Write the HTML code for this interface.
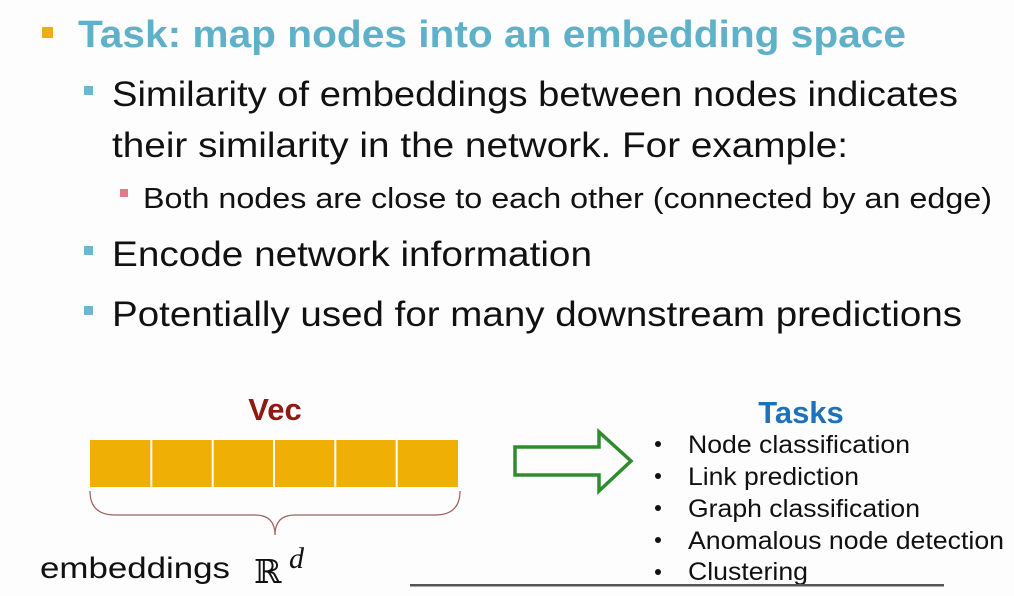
<!DOCTYPE html>
<html><head><meta charset="utf-8"><style>
html,body{margin:0;padding:0;background:#fff;}
body{width:1014px;height:596px;overflow:hidden;}
svg{display:block}
</style></head><body>
<svg width="1014" height="596" viewBox="0 0 1014 596" xmlns="http://www.w3.org/2000/svg">
<rect x="0" y="0" width="1014" height="596" fill="#fdfdfd"/>
<rect x="42" y="27" width="11" height="11" fill="#ECAE17"/>
<text x="78" y="47" font-family="Liberation Sans, sans-serif" font-weight="bold" font-size="38" fill="#5FB1C9" textLength="828" lengthAdjust="spacingAndGlyphs">Task: map nodes into an embedding space</text>
<rect x="84" y="86" width="9" height="9" fill="#6BB8D2"/>
<text x="112" y="106" font-family="Liberation Sans, sans-serif" font-size="35" fill="#111" textLength="846" lengthAdjust="spacingAndGlyphs">Similarity of embeddings between nodes indicates</text>
<text x="112" y="157" font-family="Liberation Sans, sans-serif" font-size="35" fill="#111" textLength="736" lengthAdjust="spacingAndGlyphs">their similarity in the network. For example:</text>
<rect x="120" y="189" width="8" height="8" fill="#E27A8A"/>
<text x="143" y="208" font-family="Liberation Sans, sans-serif" font-size="29" fill="#111" textLength="849" lengthAdjust="spacingAndGlyphs">Both nodes are close to each other (connected by an edge)</text>
<rect x="84" y="246" width="9" height="9" fill="#6BB8D2"/>
<text x="112" y="266" font-family="Liberation Sans, sans-serif" font-size="35" fill="#111" textLength="480" lengthAdjust="spacingAndGlyphs">Encode network information</text>
<rect x="84" y="306" width="9" height="9" fill="#6BB8D2"/>
<text x="112" y="326" font-family="Liberation Sans, sans-serif" font-size="35" fill="#111" textLength="850" lengthAdjust="spacingAndGlyphs">Potentially used for many downstream predictions</text>

<text x="275" y="420" text-anchor="middle" font-family="Liberation Sans, sans-serif" font-weight="bold" font-size="31" fill="#8E1A14">Vec</text>
<rect x="90" y="440" width="368" height="47" fill="#EFAF04"/>
<g stroke="#fff" stroke-width="2">
<line x1="151.3" y1="440" x2="151.3" y2="487"/><line x1="212.7" y1="440" x2="212.7" y2="487"/>
<line x1="274" y1="440" x2="274" y2="487"/><line x1="335.3" y1="440" x2="335.3" y2="487"/>
<line x1="396.7" y1="440" x2="396.7" y2="487"/></g>
<path d="M90 491 Q90 515 115 515 L255 515 Q275 515 275 535 Q275 515 295 515 L435 515 Q460 515 460 491" fill="none" stroke="#A06060" stroke-width="1.2"/>
<text x="40" y="578" font-family="Liberation Sans, sans-serif" font-size="30" fill="#111" textLength="190" lengthAdjust="spacingAndGlyphs">embeddings</text>
<text x="254" y="583" font-family="DejaVu Serif, serif" font-size="33" fill="#111">ℝ</text>
<text x="289" y="568" font-family="Liberation Serif, serif" font-style="italic" font-size="30" fill="#111">d</text>

<path d="M515 447 L599 447 L599 432 L631 461 L599 491 L599 475 L515 475 Z" fill="none" stroke="#2E8B2E" stroke-width="3.5"/>

<text x="801" y="423" text-anchor="middle" font-family="Liberation Sans, sans-serif" font-weight="bold" font-size="31" fill="#1F72B8">Tasks</text>
<g font-family="Liberation Sans, sans-serif" font-size="25" fill="#111">
<circle cx="658" cy="444" r="3" fill="#111"/><text x="688" y="453" textLength="222" lengthAdjust="spacingAndGlyphs">Node classification</text>
<circle cx="658" cy="476" r="3" fill="#111"/><text x="688" y="485" textLength="171" lengthAdjust="spacingAndGlyphs">Link prediction</text>
<circle cx="658" cy="508" r="3" fill="#111"/><text x="688" y="517" textLength="232" lengthAdjust="spacingAndGlyphs">Graph classification</text>
<circle cx="658" cy="540" r="3" fill="#111"/><text x="688" y="549" textLength="316" lengthAdjust="spacingAndGlyphs">Anomalous node detection</text>
<circle cx="658" cy="572" r="3" fill="#111"/><text x="688" y="580" textLength="120" lengthAdjust="spacingAndGlyphs">Clustering</text>
</g>
<rect x="410" y="584" width="534" height="2.5" fill="#555"/>
</svg>
</body></html>
